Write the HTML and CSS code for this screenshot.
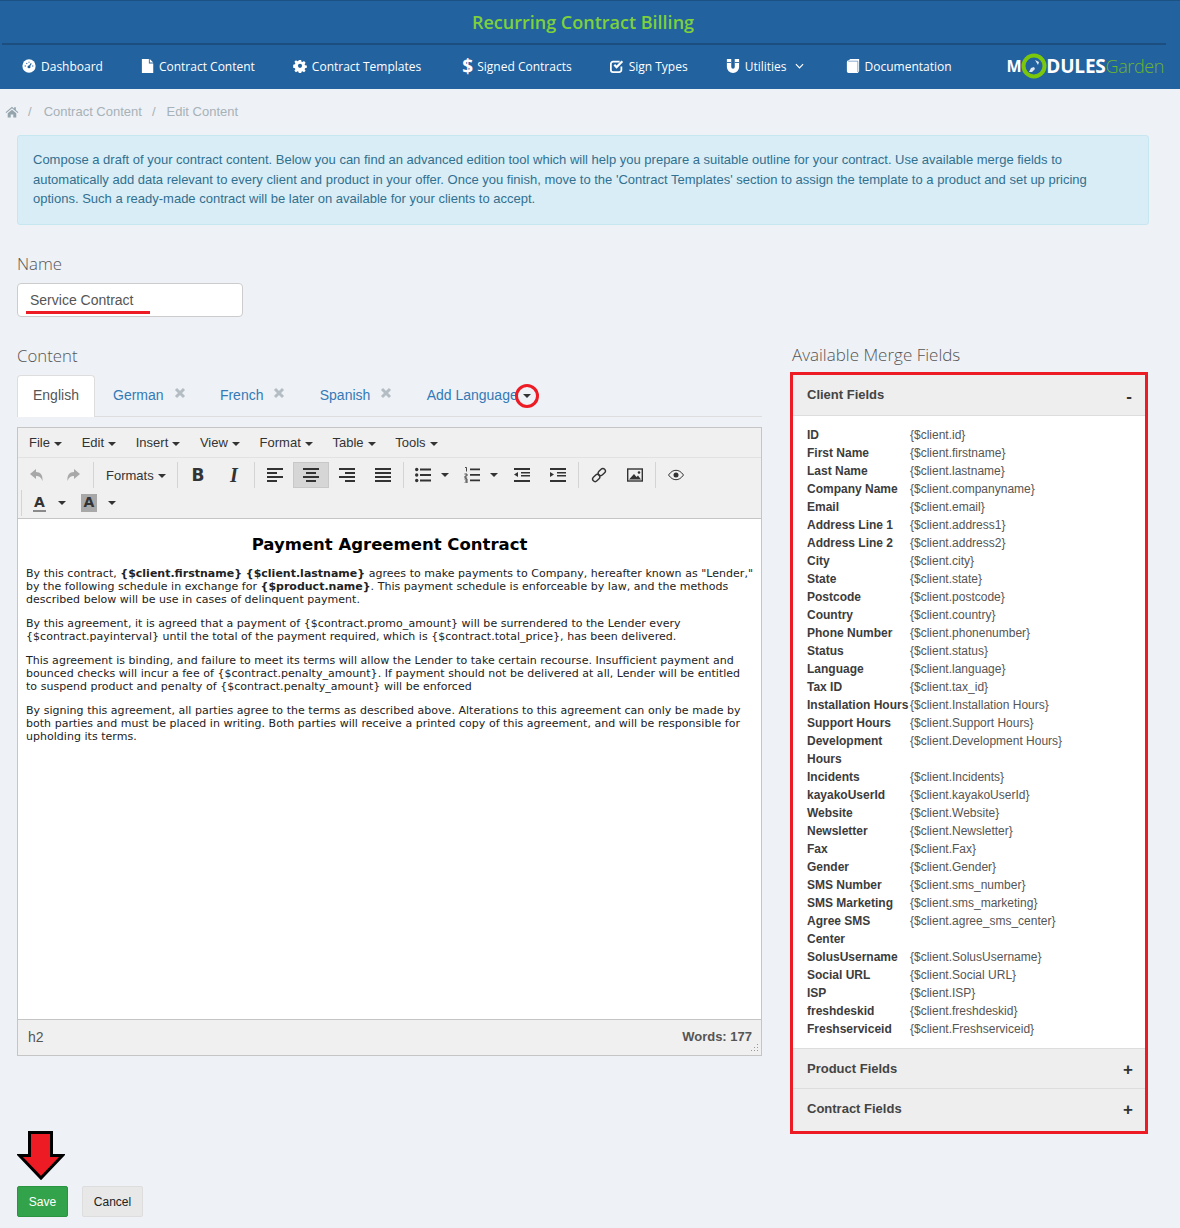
FILE: index.html
```html
<!DOCTYPE html>
<html lang="en">

<head>
    <meta charset="UTF-8">
    <title>Recurring Contract Billing</title>
    <link rel="stylesheet" href="styles.css">
</head>

<body>
    <header class="top">
        <h1 class="top-title">Recurring Contract Billing</h1>
        <nav class="nav">
            <a class="nav-item"><svg class="nav-icon" viewBox="0 0 16 16"><circle cx="8" cy="8" r="7.6" fill="#fff"/><circle cx="8" cy="9" r="1.7" fill="#22629f"/><path d="M8 9l2.6-4" stroke="#22629f" stroke-width="1.2"/><path d="M3 8h1.5M5 4.6l1 1M8 3v1.4M11.5 8H13" stroke="#22629f" stroke-width="1.2"/></svg>Dashboard</a>
            <a class="nav-item"><svg class="nav-icon nav-icon-file" viewBox="0 0 16 16"><path d="M1 0h8v5h5v11H1z" fill="#fff"/><path d="M10 0l4 4h-4z" fill="#fff"/></svg>Contract Content</a>
            <a class="nav-item nav-item-templates"><svg class="nav-icon" viewBox="0 0 16 16"><path d="M6.700 1h2.600l.4 2 1.200.5 1.700-1.100 1.800 1.800-1.100 1.700.5 1.200 2 .4v2.600l-2 .4-.5 1.200 1.100 1.700-1.800 1.800-1.700-1.100-1.200.5-.4 2H6.700l-.4-2-1.200-.5-1.700 1.100-1.800-1.800 1.100-1.700-.5-1.200-2-.4V6.500l2-.4.5-1.200-1.100-1.700 1.800-1.800 1.700 1.100 1.200-.5z" fill="#fff"/><circle cx="8" cy="7.800" r="2.400" fill="#22629f"/></svg>Contract Templates</a>
            <a class="nav-item"><span class="dollar">$</span>Signed Contracts</a>
            <a class="nav-item"><svg class="nav-icon" viewBox="0 0 16 16"><path d="M13 8.500v4A2.500 2.500 0 0 1 10.500 15h-7A2.500 2.500 0 0 1 1 12.500v-7A2.500 2.500 0 0 1 3.500 3H11" fill="none" stroke="#fff" stroke-width="2"/><path d="M4 7.500l3.500 3.500L15 3.500 13.200 1.800 7.500 7.500 5.800 5.800z" fill="#fff"/></svg>Sign Types</a>
            <a class="nav-item nav-item-utilities"><svg class="nav-icon" viewBox="0 0 16 16"><path d="M1 0h5v9a2 2 0 0 0 4 0V0h5v9A7 7 0 0 1 1 9z" fill="#fff"/><path d="M1 4h5M10 4h5" stroke="#22629f" stroke-width="1"/></svg>Utilities<svg class="nav-chevron" viewBox="0 0 10 6"><path d="M1 1l4 4 4-4" fill="none" stroke="#fff" stroke-width="1.300"/></svg></a>
            <a class="nav-item"><svg class="nav-icon" viewBox="0 0 16 16"><path d="M3 1.500 5 0h10v14l-1.500 2H3a2 2 0 0 1-2-2V3.500A2 2 0 0 1 3 1.500z" fill="#fff"/><path d="M2.500 2.500h11V15" fill="none" stroke="#22629f" stroke-width=".6"/></svg>Documentation</a>
            <div class="logo">
                <span class="logo-m">M</span><svg class="logo-o" viewBox="0 0 26 26"><circle cx="13" cy="13" r="10.500" fill="#22629f" stroke="#7ac70c" stroke-width="4"/><path d="M14 7l4 2-1 3zM8 19l2-4 3-1 1 2-3 3z" fill="#dfe8f0"/></svg><span>DULES</span><span class="logo-garden">Garden</span>
            </div>
        </nav>
    </header>

    <main class="page">
        <div class="crumbs">
            <svg class="crumb-home" viewBox="0 0 16 14"><path d="M8 1 .5 7.300l.8.900L8 2.700l6.700 5.500.8-.9L12.500 4.800V1.500h-2v1.700zM3 8.500 8 4.300l5 4.200V13.500H9.500V10h-3v3.500H3z" fill="#94a4ac"/></svg>
            <span class="crumb-sep crumb-sep-first">/</span>
            <span>Contract Content</span>
            <span class="crumb-sep">/</span>
            <span>Edit Content</span>
        </div>

        <div class="notice">
            Compose a draft of your contract content. Below you can find an advanced edition tool which will help you prepare a suitable outline for your contract. Use available merge fields to automatically add data relevant to every client and product in your offer. Once you finish, move to the 'Contract Templates' section to assign the template to a product and set up pricing options. Such a ready-made contract will be later on available for your clients to accept.
        </div>

        <label class="field-label">Name</label>
        <div class="name-field">
            <input class="name-input" type="text" value="Service Contract">
            <span class="name-mark"></span>
        </div>

        <div class="columns">
            <section class="col-main">
                <div class="field-label">Content</div>
                <ul class="tabs">
                    <li class="tab tab-active">English</li>
                    <li class="tab">German<svg class="tab-x" viewBox="0 0 12 12"><path d="M2 2l8 8M10 2l-8 8" stroke="#b4bcc4" stroke-width="3"/></svg></li>
                    <li class="tab">French<svg class="tab-x" viewBox="0 0 12 12"><path d="M2 2l8 8M10 2l-8 8" stroke="#b4bcc4" stroke-width="3"/></svg></li>
                    <li class="tab">Spanish<svg class="tab-x" viewBox="0 0 12 12"><path d="M2 2l8 8M10 2l-8 8" stroke="#b4bcc4" stroke-width="3"/></svg></li>
                    <li class="tab">Add Language<span class="caret caret-add"></span><span class="ring"></span></li>
                </ul>

                <div class="editor">
                    <div class="menubar">
                        <span class="menu">File<span class="caret"></span></span>
                        <span class="menu">Edit<span class="caret"></span></span>
                        <span class="menu">Insert<span class="caret"></span></span>
                        <span class="menu">View<span class="caret"></span></span>
                        <span class="menu">Format<span class="caret"></span></span>
                        <span class="menu">Table<span class="caret"></span></span>
                        <span class="menu">Tools<span class="caret"></span></span>
                    </div>
                    <div class="toolbar">
                        <div class="tool-row">
                            <div class="tool-group">
                                <span class="tool tool-off"><svg viewBox="0 0 16 16"><path d="M7 2 1 7l6 5V9c3 0 5 1 6.500 5C14 8 11.500 5 7 5z" fill="#a8a8a8"/></svg></span>
                                <span class="tool tool-off"><svg viewBox="0 0 16 16"><path d="M9 2l6 5-6 5V9c-3 0-5 1-6.500 5C2 8 4.500 5 9 5z" fill="#a8a8a8"/></svg></span>
                            </div>
                            <div class="tool-group tool-group-formats">
                                <span class="tool-text">Formats<span class="caret"></span></span>
                            </div>
                            <div class="tool-group">
                                <span class="tool tool-letter tool-bold">B</span>
                                <span class="tool tool-letter tool-italic">I</span>
                            </div>
                            <div class="tool-group">
                                <span class="tool"><svg viewBox="0 0 16 16"><path d="M0 1h16v2H0zM0 5h10v2H0zM0 9h16v2H0zM0 13h10v2H0z" fill="#333"/></svg></span>
                                <span class="tool tool-on"><svg viewBox="0 0 16 16"><path d="M0 1h16v2H0zM3 5h10v2H3zM0 9h16v2H0zM3 13h10v2H3z" fill="#333"/></svg></span>
                                <span class="tool"><svg viewBox="0 0 16 16"><path d="M0 1h16v2H0zM6 5h10v2H6zM0 9h16v2H0zM6 13h10v2H6z" fill="#333"/></svg></span>
                                <span class="tool"><svg viewBox="0 0 16 16"><path d="M0 1h16v2H0zM0 5h16v2H0zM0 9h16v2H0zM0 13h16v2H0z" fill="#333"/></svg></span>
                            </div>
                            <div class="tool-group">
                                <span class="tool tool-split"><svg viewBox="0 0 16 16"><circle cx="1.700" cy="2.500" r="1.700" fill="#333"/><circle cx="1.700" cy="8" r="1.700" fill="#333"/><circle cx="1.700" cy="13.500" r="1.700" fill="#333"/><path d="M5 1.500h11v2H5zM5 7h11v2H5zM5 12.500h11v2H5z" fill="#333"/></svg><span class="caret caret-split"></span></span>
                                <span class="tool tool-split"><svg viewBox="0 0 16 16"><path d="M6 1.500h10v1.800H6zM6 7h10v1.800H6zM6 12.500h10v1.800H6z" fill="#333"/><path d="M1 .500h1.500v4M.500 7h2.500v2H1v2h2.200M.500 12h2.500v4H.500M1 14h2" fill="none" stroke="#333" stroke-width=".9"/></svg><span class="caret caret-split"></span></span>
                                <span class="tool"><svg viewBox="0 0 16 16"><path d="M0 1h16v2H0zM7 5h9v1.500H7zM7 8h9v1.500H7zM0 13h16v2H0zM4 5v5L0 7.500z" fill="#333"/></svg></span>
                                <span class="tool"><svg viewBox="0 0 16 16"><path d="M0 1h16v2H0zM7 5h9v1.500H7zM7 8h9v1.500H7zM0 13h16v2H0zM0 5v5l4-2.500z" fill="#333"/></svg></span>
                            </div>
                            <div class="tool-group">
                                <span class="tool"><svg viewBox="0 0 16 16"><g fill="none" stroke="#333" stroke-width="1.400"><rect x="8.300" y="1" width="5" height="8" rx="2.500" transform="rotate(45 10.800 5)"/><rect x="2.700" y="7" width="5" height="8" rx="2.500" transform="rotate(45 5.200 11)"/></g></svg></span>
                                <span class="tool"><svg viewBox="0 0 16 16"><rect x=".700" y="2" width="14.600" height="12" fill="none" stroke="#333" stroke-width="1.400"/><path d="M2 12.500 7 7l2.500 3 1.500-1.500 3 4z" fill="#333"/><circle cx="12" cy="5.500" r="1.300" fill="#333"/></svg></span>
                            </div>
                            <div class="tool-group tool-group-last">
                                <span class="tool"><svg viewBox="0 0 16 16"><path d="M.500 8C3 4.500 5.500 3.300 8 3.300S13 4.500 15.500 8C13 11.500 10.500 12.700 8 12.700S3 11.500.500 8z" fill="none" stroke="#333" stroke-width="1"/><circle cx="8" cy="8" r="2.500" fill="#333"/></svg></span>
                            </div>
                        </div>
                        <div class="tool-row">
                            <div class="tool-group tool-group-color">
                                <span class="color-tool"><span class="color-a">A</span><span class="caret caret-color"></span></span>
                                <span class="color-tool"><span class="color-a color-a-back">A</span><span class="caret caret-back"></span></span>
                            </div>
                        </div>
                    </div>
                    <div class="doc">
                        <h2 class="doc-title">Payment Agreement Contract</h2>
                        <p>By this contract, <strong>{$client.firstname} {$client.lastname}</strong> agrees to make payments to Company, hereafter known as "Lender," by the following schedule in exchange for <strong>{$product.name}</strong>. This payment schedule is enforceable by law, and the methods described below will be use in cases of delinquent payment.</p>
                        <p>By this agreement, it is agreed that a payment of {$contract.promo_amount} will be surrendered to the Lender every {$contract.payinterval} until the total of the payment required, which is {$contract.total_price}, has been delivered.</p>
                        <p>This agreement is binding, and failure to meet its terms will allow the Lender to take certain recourse. Insufficient payment and bounced checks will incur a fee of {$contract.penalty_amount}. If payment should not be delivered at all, Lender will be entitled<br>to suspend product and penalty of {$contract.penalty_amount} will be enforced</p>
                        <p>By signing this agreement, all parties agree to the terms as described above. Alterations to this agreement can only be made by both parties and must be placed in writing. Both parties will receive a printed copy of this agreement, and will be responsible for upholding its terms.</p>
                    </div>
                    <div class="statusbar">
                        <span>h2</span>
                        <span class="words">Words: 177</span>
                        <svg class="grip" viewBox="0 0 10 10"><path d="M8 1h1v1H8zM5 4h1v1H5zM8 4h1v1H8zM2 7h1v1H2zM5 7h1v1H5zM8 7h1v1H8z" fill="#999"/></svg>
                    </div>
                </div>
            </section>

            <aside class="col-side">
                <div class="side-title">Available Merge Fields</div>
                <div class="merge-box">
                    <div class="merge-head"><span>Client Fields</span><span class="merge-sign">-</span></div>
                    <table class="merge-table">
                        <tr><th>ID</th><td>{$client.id}</td></tr>
                        <tr><th>First Name</th><td>{$client.firstname}</td></tr>
                        <tr><th>Last Name</th><td>{$client.lastname}</td></tr>
                        <tr><th>Company Name</th><td>{$client.companyname}</td></tr>
                        <tr><th>Email</th><td>{$client.email}</td></tr>
                        <tr><th>Address Line 1</th><td>{$client.address1}</td></tr>
                        <tr><th>Address Line 2</th><td>{$client.address2}</td></tr>
                        <tr><th>City</th><td>{$client.city}</td></tr>
                        <tr><th>State</th><td>{$client.state}</td></tr>
                        <tr><th>Postcode</th><td>{$client.postcode}</td></tr>
                        <tr><th>Country</th><td>{$client.country}</td></tr>
                        <tr><th>Phone Number</th><td>{$client.phonenumber}</td></tr>
                        <tr><th>Status</th><td>{$client.status}</td></tr>
                        <tr><th>Language</th><td>{$client.language}</td></tr>
                        <tr><th>Tax ID</th><td>{$client.tax_id}</td></tr>
                        <tr><th>Installation Hours</th><td>{$client.Installation Hours}</td></tr>
                        <tr><th>Support Hours</th><td>{$client.Support Hours}</td></tr>
                        <tr><th>Development Hours</th><td>{$client.Development Hours}</td></tr>
                        <tr><th>Incidents</th><td>{$client.Incidents}</td></tr>
                        <tr><th>kayakoUserId</th><td>{$client.kayakoUserId}</td></tr>
                        <tr><th>Website</th><td>{$client.Website}</td></tr>
                        <tr><th>Newsletter</th><td>{$client.Newsletter}</td></tr>
                        <tr><th>Fax</th><td>{$client.Fax}</td></tr>
                        <tr><th>Gender</th><td>{$client.Gender}</td></tr>
                        <tr><th>SMS Number</th><td>{$client.sms_number}</td></tr>
                        <tr><th>SMS Marketing</th><td>{$client.sms_marketing}</td></tr>
                        <tr><th>Agree SMS Center</th><td>{$client.agree_sms_center}</td></tr>
                        <tr><th>SolusUsername</th><td>{$client.SolusUsername}</td></tr>
                        <tr><th>Social URL</th><td>{$client.Social URL}</td></tr>
                        <tr><th>ISP</th><td>{$client.ISP}</td></tr>
                        <tr><th>freshdeskid</th><td>{$client.freshdeskid}</td></tr>
                        <tr><th>Freshserviceid</th><td>{$client.Freshserviceid}</td></tr>
                    </table>
                    <div class="merge-head merge-head-closed"><span>Product Fields</span><span class="merge-sign">+</span></div>
                    <div class="merge-head merge-head-closed merge-head-last"><span>Contract Fields</span><span class="merge-sign">+</span></div>
                </div>
            </aside>
        </div>

        <div class="actions">
            <svg class="arrow" viewBox="0 0 48 50"><path d="M12.500 1.500h22v23h11L24 47 2.500 24.500h10z" fill="#ed1c24" stroke="#000" stroke-width="3"/></svg>
            <button class="btn btn-save" type="button">Save</button>
            <button class="btn btn-cancel" type="button">Cancel</button>
        </div>
    </main>
</body>

</html>
```

FILE: styles.css
```css
* {
    box-sizing: border-box;
}

body {
    margin: 0;
    background-color: #eef1f6;
    font-family: "Liberation Sans", Arial, sans-serif;
    font-size: 14px;
    color: #555;
}

/* header */
.top {
    height: 89px;
    padding: 1px 14px 0 2px;
    background-color: #22629f;
    border-top: 1px solid #1c5184;
}

.top-title {
    height: 43px;
    margin: 0;
    border-bottom: 2px solid #1c4f80;
    padding-top: 8px;
    padding-right: 2px;
    font-family: "Open Sans", sans-serif;
    font-size: 18px;
    font-weight: 600;
    line-height: 24px;
    text-align: center;
    color: #7ed13a;
}

.nav {
    display: flex;
    align-items: center;
    height: 43px;
    padding: 0 2px 1px 20px;
}

.nav-item {
    display: flex;
    align-items: center;
    margin-right: 38px;
    font-family: "Open Sans", sans-serif;
    font-size: 12px;
    white-space: nowrap;
    color: #fff;
}

.nav-item-templates {
    margin-right: 41px;
}

.nav-item-utilities {
    margin-right: 42px;
}

.nav-icon {
    width: 14px;
    height: 14px;
    margin-right: 5px;
}

.nav-icon-file {
    margin-right: 4px;
}

.dollar {
    width: 10px;
    margin-right: 5px;
    font-size: 19px;
    font-weight: 700;
    line-height: 14px;
}

.nav-chevron {
    width: 9px;
    height: 6px;
    margin-left: 8px;
}

.logo {
    display: flex;
    align-items: center;
    margin-left: auto;
    font-family: "Open Sans", sans-serif;
    font-size: 19px;
    font-weight: 700;
    line-height: 26px;
    letter-spacing: -.2px;
    color: #fff;
}

.logo-m {
    font-size: 16px;
}

.logo-o {
    width: 26px;
    height: 26px;
    margin: 0 -1px 0 0;
}

.logo-garden {
    font-size: 18px;
    font-weight: 300;
    letter-spacing: -.4px;
    color: #6cb52c;
}

/* page */
.page {
    padding: 0 30px 0 17px;
}

.crumbs {
    display: flex;
    align-items: center;
    height: 45px;
    margin-left: -12px;
    margin-bottom: 1px;
    font-size: 13px;
    color: #a7b1b8;
}

.crumb-home {
    width: 14px;
    height: 12px;
}

.crumb-sep {
    margin: 0 11px 0 10px;
}

.crumb-sep-first {
    margin-left: 9px;
    margin-right: 12px;
}

.notice {
    height: 90px;
    margin-right: 1px;
    padding: 14px 15px 0;
    border: 1px solid #c6e6f0;
    border-radius: 3px;
    background-color: #d9edf7;
    font-size: 13px;
    line-height: 19.600px;
    color: #31708f;
}

.field-label {
    display: block;
    margin-top: 28px;
    font-family: "Open Sans", sans-serif;
    font-size: 16.800px;
    font-weight: 300;
    line-height: 22px;
    color: #555;
}

.name-field {
    position: relative;
    width: 226px;
    margin-top: 8px;
}

.name-input {
    display: block;
    width: 100%;
    height: 34px;
    padding: 0 12px;
    border: 1px solid #ccc;
    border-radius: 4px;
    font-family: "Liberation Sans", Arial, sans-serif;
    font-size: 14px;
    color: #555;
    background-color: #fff;
}

.name-mark {
    position: absolute;
    left: 9px;
    top: 28px;
    width: 124px;
    height: 3px;
    background-color: #ed1c24;
}

.columns {
    display: flex;
    align-items: flex-start;
}

.col-main {
    width: 745px;
    margin-right: 28px;
}

.col-side {
    width: 358px;
    padding-top: 27px;
}

/* tabs */
.tabs {
    display: flex;
    height: 42px;
    margin: 8px 0 10px;
    padding: 0;
    list-style: none;
    border-bottom: 1px solid #ddd;
    color: #337ab7;
}

.tab {
    position: relative;
    height: 42px;
    margin-right: 16.300px;
    padding: 10px 0 0 18px;
    line-height: 20px;
    white-space: nowrap;
}

.tab-active {
    width: 78px;
    margin-right: 0;
    padding-top: 9px;
    padding-left: 15px;
    background-color: #fff;
    border: 1px solid #ddd;
    border-bottom: 0;
    border-radius: 4px 4px 0 0;
    color: #555;
}

.tab-x {
    width: 12px;
    height: 12px;
    margin-left: 10px;
    vertical-align: 1px;
}

.caret {
    display: inline-block;
    width: 0;
    height: 0;
    margin-left: 4px;
    border-top: 4px solid #333;
    border-left: 4px solid transparent;
    border-right: 4px solid transparent;
    vertical-align: middle;
}

.caret-add {
    margin-left: 5px;
}

.ring {
    position: absolute;
    left: 106px;
    top: 9px;
    width: 24px;
    height: 24px;
    border: 3px solid #ed1c24;
    border-radius: 50%;
}

/* editor */
.editor {
    height: 629px;
    display: flex;
    flex-direction: column;
    border: 1px solid #c5c5c5;
    background-color: #f0f0f0;
}

.menubar {
    display: flex;
    height: 30px;
    padding-left: 3px;
    align-items: center;
    border-bottom: 1px solid #e2e2e2;
}

.menu {
    padding: 0 8px;
    margin-right: 3.700px;
    font-size: 13px;
    color: #333;
}

.toolbar {
    height: 61px;
    border-bottom: 1px solid #c5c5c5;
}

.tool-row {
    display: flex;
    height: 28px;
    margin-left: -1px;
}

.tool-row:first-child {
    height: 32px;
    padding-top: 4px;
}

.tool-group {
    display: flex;
    align-items: center;
    height: 26px;
    padding: 0 2px;
    border-right: 1px solid #d4d4d4;
}

.tool-group-last {
    border-right: 0;
}

.tool-group-formats {
    width: 84px;
    padding-left: 12px;
}

.tool-group-color {
    margin-left: 4px;
    padding-left: 0;
    border-right: 0;
    border-left: 1px solid #d4d4d4;
}

.tool {
    display: flex;
    align-items: center;
    justify-content: center;
    width: 36px;
    height: 26px;
    color: #333;
}

.tool svg {
    flex: none;
    width: 16px;
    height: 16px;
}

.tool-on {
    background-color: #d6d6d6;
    border: 1px solid #c8c8c8;
}

.tool-text {
    font-size: 13px;
    color: #333;
}

.tool-letter {
    font-size: 18px;
    line-height: 26px;
}

.tool-bold {
    font-family: "DejaVu Sans", sans-serif;
    font-weight: 700;
    font-size: 17px;
}

.tool-italic {
    font-family: "Liberation Serif", serif;
    font-style: italic;
    font-weight: 700;
    font-size: 20px;
}

.tool-split {
    width: 49px;
    justify-content: flex-start;
    padding-left: 9px;
}

.caret-split {
    flex: none;
    margin-left: 10px;
}

.color-tool {
    display: flex;
    align-items: center;
    width: 49px;
    padding-left: 11px;
}

.color-a {
    display: block;
    width: 13px;
    height: 18px;
    border-bottom: 2px solid #8a8a8a;
    font-family: "DejaVu Sans", sans-serif;
    font-size: 14px;
    font-weight: 700;
    line-height: 16px;
    text-align: center;
    color: #333;
}

.color-a-back {
    width: 16px;
    margin-left: -1px;
    border-bottom: 0;
    background-color: #a8a8a8;
}

.caret-color {
    margin-left: 12px;
}

.caret-back {
    margin-left: 11px;
}

.doc {
    flex: 1;
    padding: 15px 4px 0 8px;
    background-color: #fff;
    font-family: "DejaVu Sans", Verdana, sans-serif;
    font-size: 11px;
    line-height: 13px;
    letter-spacing: .03px;
    color: #222;
}

.doc strong {
    letter-spacing: 0;
}

.doc-title {
    margin: 0 0 11px;
    padding-right: 4px;
    font-size: 16.500px;
    line-height: 22px;
    letter-spacing: 0;
    text-align: center;
    color: #000;
}

.doc p {
    margin: 0 0 11px;
}

.statusbar {
    position: relative;
    display: flex;
    justify-content: space-between;
    align-items: center;
    height: 36px;
    padding: 0 9px 2px 10px;
    border-top: 1px solid #c5c5c5;
}

.words {
    font-size: 13px;
    font-weight: 700;
    color: #555;
}

.grip {
    position: absolute;
    right: 2px;
    bottom: 2px;
    width: 10px;
    height: 10px;
}

/* merge fields */
.side-title {
    margin-left: 2px;
    font-family: "Open Sans", sans-serif;
    font-size: 17px;
    font-weight: 300;
    line-height: 22px;
    color: #555;
}

.merge-box {
    margin-top: 6px;
    border: 3px solid #ed1c24;
    background-color: #fff;
}

.merge-head {
    display: flex;
    justify-content: space-between;
    height: 41px;
    padding: 10px 13px 0 14px;
    border-bottom: 1px solid #ddd;
    background-color: #eee;
    font-size: 13px;
    font-weight: 700;
    line-height: 20px;
    color: #444;
}

.merge-sign {
    margin-top: 2px;
    font-size: 17px;
    color: #333;
}

.merge-head-closed {
    height: 40px;
    padding-right: 12px;
    border-top: 1px solid #ddd;
    border-bottom: 0;
}

.merge-head-closed .merge-sign {
    margin-top: 1px;
}

.merge-head-last {
    height: 43px;
}

.merge-table {
    width: 100%;
    margin: 10px 0;
    border-collapse: collapse;
    table-layout: fixed;
    font-size: 12px;
    line-height: 18px;
}

.merge-table th {
    width: 117px;
    padding: 0 0 0 14px;
    text-align: left;
    vertical-align: top;
    color: #3c3c3c;
}

.merge-table td {
    padding: 0;
    vertical-align: top;
    color: #555;
}

/* bottom buttons */
.actions {
    position: relative;
    height: 99px;
    margin-top: -5px;
    display: flex;
    align-items: flex-end;
    padding-bottom: 11px;
}

.arrow {
    position: absolute;
    left: 0;
    top: 2px;
    width: 48px;
    height: 50px;
}

.btn {
    height: 31px;
    padding: 0;
    border-radius: 2px;
    font-family: "Liberation Sans", Arial, sans-serif;
    font-size: 12px;
    cursor: pointer;
}

.btn-save {
    width: 51px;
    margin-right: 14px;
    border: 1px solid #2a9440;
    background-color: #32a34a;
    color: #fff;
}

.btn-cancel {
    width: 61px;
    border: 1px solid #ddd;
    background-color: #e8e8e8;
    color: #222;
}
```
